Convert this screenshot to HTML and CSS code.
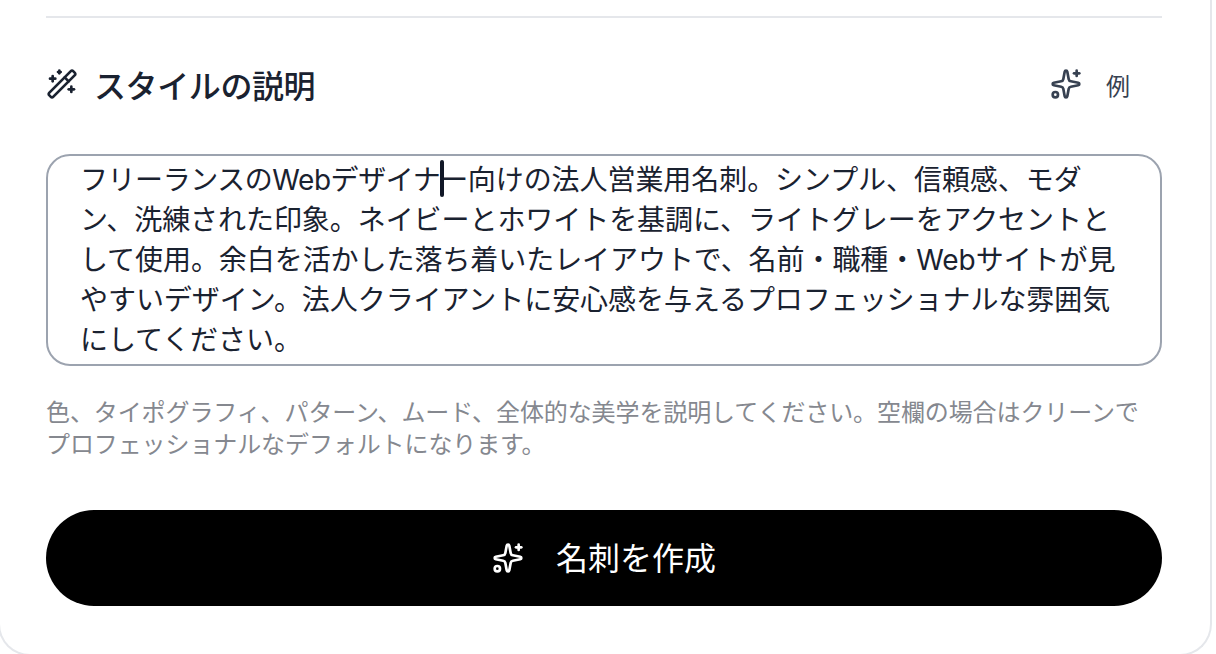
FILE: index.html
```html
<!DOCTYPE html>
<html lang="ja">
<head>
    <meta charset="UTF-8">
    <meta name="viewport" content="width=device-width, initial-scale=1.0">
    <title>スタイルの説明</title>
    <link rel="stylesheet" href="styles.css">
</head>
<body>

<div class="card">
    <div class="divider"></div>

    <div class="section-head">
        <div class="section-title">
            <svg class="icon-wand" viewBox="0 0 24 24" fill="none" stroke="currentColor" stroke-width="2" stroke-linecap="round" stroke-linejoin="round">
                <path d="M21.64 3.64l-1.28-1.28a1.21 1.21 0 0 0-1.72 0L2.36 18.64a1.21 1.21 0 0 0 0 1.72l1.28 1.28a1.2 1.2 0 0 0 1.72 0L21.64 5.36a1.2 1.2 0 0 0 0-1.72"/>
                <path d="M14 7l3 3"/>
                <path d="M5 6v4"/>
                <path d="M19 14v4"/>
                <path d="M10 2v2"/>
                <path d="M7 8H3"/>
                <path d="M21 16h-4"/>
                <path d="M11 3H9"/>
            </svg>
            <span>スタイルの説明</span>
        </div>
        <button class="example-btn">
            <svg class="icon-sparkle" viewBox="0 0 24 24" fill="none" stroke="currentColor" stroke-width="2" stroke-linecap="round" stroke-linejoin="round">
                <path d="M11.017 2.814a1 1 0 0 1 1.966 0l1.051 5.558a2 2 0 0 0 1.594 1.594l5.558 1.051a1 1 0 0 1 0 1.966l-5.558 1.051a2 2 0 0 0-1.594 1.594l-1.051 5.558a1 1 0 0 1-1.966 0l-1.051-5.558a2 2 0 0 0-1.594-1.594l-5.558-1.051a1 1 0 0 1 0-1.966l5.558-1.051a2 2 0 0 0 1.594-1.594z"/>
                <path d="M20 2v4"/>
                <path d="M22 4h-4"/>
                <circle cx="4" cy="20" r="2"/>
            </svg>
            <span>例</span>
        </button>
    </div>

    <div class="style-input">
        <div class="style-text"><span class="tight">フリーランスのWebデザイナー</span>向けの法人営業用名刺。シンプル、信頼感、モダン、洗練された印象。ネイビーとホワイトを基調に、ライトグレーをアクセントとして使用。余白を活かした落ち着いたレイアウトで、名前・職種・Webサイトが見やすいデザイン。法人クライアントに安心感を与えるプロフェッショナルな雰囲気にしてください。</div>
        <div class="caret"></div>
    </div>

    <p class="help">色、タイポグラフィ、パターン、ムード、全体的な美学を説明してください。空欄の場合はクリーンでプロフェッショナルなデフォルトになります。</p>

    <button class="submit">
        <svg class="icon-sparkle-white" viewBox="0 0 24 24" fill="none" stroke="currentColor" stroke-width="2" stroke-linecap="round" stroke-linejoin="round">
            <path d="M11.017 2.814a1 1 0 0 1 1.966 0l1.051 5.558a2 2 0 0 0 1.594 1.594l5.558 1.051a1 1 0 0 1 0 1.966l-5.558 1.051a2 2 0 0 0-1.594 1.594l-1.051 5.558a1 1 0 0 1-1.966 0l-1.051-5.558a2 2 0 0 0-1.594-1.594l-5.558-1.051a1 1 0 0 1 0-1.966l5.558-1.051a2 2 0 0 0 1.594-1.594z"/>
            <path d="M20 2v4"/>
            <path d="M22 4h-4"/>
            <circle cx="4" cy="20" r="2"/>
        </svg>
        <span class="submit-label">名刺を作成</span>
    </button>
</div>

</body>
</html>
```

FILE: styles.css
```css
html, body {
    margin: 0;
    height: 654px;
    overflow: hidden;
    background: #ffffff;
}
body {
    font-family: Inter, "Noto Sans CJK JP", sans-serif;
    color: #111827;
}
.card {
    box-sizing: border-box;
    width: 1214px;
    height: 656px;
    margin-left: -2px;
    padding: 16px 48px 0 46px;
    background: #ffffff;
    border-right: 2px solid #e5e7eb;
    border-bottom: 2px solid #e5e7eb;
    border-left: 2px solid #e5e7eb;
    border-radius: 0 0 32px 32px;
}
.divider {
    height: 2px;
    background: #e5e7eb;
}
.section-head {
    display: flex;
    align-items: center;
    justify-content: space-between;
    height: 136px;
}
.section-title {
    display: flex;
    align-items: center;
    gap: 16px;
    padding-bottom: 4px;
    font-size: 32px;
    font-weight: 500;
    letter-spacing: -0.4px;
    color: #1a2230;
}
.icon-wand {
    width: 32px;
    height: 32px;
}
.example-btn {
    display: flex;
    align-items: center;
    gap: 24px;
    padding: 0 32px 4px 0;
    border: none;
    background: none;
    font-family: inherit;
    font-size: 24px;
    color: #374151;
}
.icon-sparkle {
    width: 32px;
    height: 32px;
}
.style-input {
    position: relative;
    box-sizing: border-box;
    height: 212px;
    padding: 4px 40px 0 32px;
    border: 2px solid #9ca3af;
    border-radius: 24px;
    overflow: hidden;
}
.style-text {
    font-size: 28px;
    line-height: 40px;
    letter-spacing: -0.06px;
    color: #1a2230;
}
.tight {
    letter-spacing: -0.45px;
}
.caret {
    position: absolute;
    left: 392px;
    top: 4px;
    width: 4px;
    height: 37px;
    border-radius: 2px;
    background: #111827;
}
.help {
    margin: 31px 0 0;
    font-size: 24px;
    line-height: 32px;
    letter-spacing: -0.1px;
    color: #85888f;
}
.submit {
    display: flex;
    align-items: center;
    justify-content: center;
    gap: 32px;
    width: 100%;
    height: 96px;
    margin-top: 49px;
    border: none;
    border-radius: 48px;
    background: #000000;
    color: #ffffff;
    font-family: inherit;
    font-size: 32px;
    font-weight: 400;
}
.submit-label {
    padding-bottom: 5px;
}
.icon-sparkle-white {
    width: 32px;
    height: 32px;
}
```
